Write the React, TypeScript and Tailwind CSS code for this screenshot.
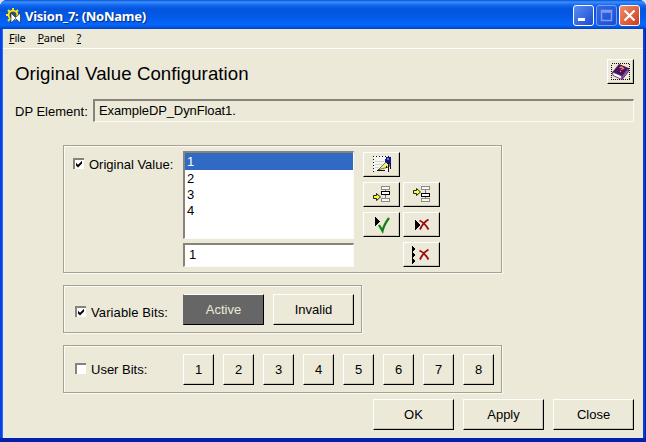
import React from 'react';

const raised =
  'border border-t-white border-l-white border-r-black border-b-black shadow-[inset_-1px_-1px_0_#c9c5b4] bg-[#ece9d8] flex items-center justify-center shrink-0';
const group = 'border border-[#a5a293] shadow-[inset_1px_1px_0_#fbfaf4,1px_1px_0_#fbfaf4] flex items-start';
const sunken = 'border-t-2 border-l-2 border-r border-b border-t-[#85837a] border-l-[#85837a] border-r-[#fbfaf4] border-b-[#fbfaf4]';

function Check({ on = false }: { on?: boolean }) {
  return (
    <span className="w-[11px] h-[11px] mb-[3px] shrink-0 bg-white border-t-2 border-l-2 border-[#85837a] flex">
      {on && (
        <svg width="9" height="9" viewBox="0 0 9 9" className="shrink-0">
          <path d="M1 2.8v2.6l2 2 4-4V.8L3 4.8z" fill="#000" />
        </svg>
      )}
    </span>
  );
}

function Btn({ label, small = false, active = false }: { label: string; small?: boolean; active?: boolean }) {
  return (
    <button
      className={
        active
          ? 'w-[81px] h-[31px] border border-t-white border-l-[#666] border-r-black border-b-black bg-[#666] text-[#ece9d8] flex items-center justify-center'
          : `${raised} h-[31px] ${small ? 'w-[31px]' : 'w-[81px]'}`
      }
    >
      <span>{label}</span>
    </button>
  );
}

function IconBtn({ children }: { children: React.ReactNode }) {
  return (
    <button className={`${raised} w-[37px] h-[25px]`}>
      <svg width="35" height="23" viewBox="0 0 35 23" className="shrink-0" shapeRendering="crispEdges">
        {children}
      </svg>
    </button>
  );
}

const Arrow = ({ x, y }: { x: number; y: number }) => (
  <path
    transform={`translate(${x} ${y})`}
    d="M.5 2.5h3v-2l4 3.5-4 3.5v-2h-3z"
    fill="#ffff30"
    stroke="#222"
    shapeRendering="auto"
  />
);

const Boxes = ({ x, y, middle }: { x: number; y: number; middle: number }) => (
  <g transform={`translate(${x} ${y})`} fill="#f8f8f4">
    <path d="M4.5 4v9" stroke="#777" />
    <rect x=".5" y=".5" width="8" height="3" stroke="#8a8a86" />
    <rect x=".5" y="12.5" width="8" height="3" stroke="#8a8a86" />
    <rect x=".5" y={middle + 0.5} width="8" height="3" stroke="#000" />
  </g>
);

const Cross = ({ x, y }: { x: number; y: number }) => (
  <path
    transform={`translate(${x} ${y})`}
    d="M.5 1.5C4 3 7 6 9.5 10.5M9.500 .5C5 3 3 6 1 10.5"
    stroke="#980d0d"
    strokeWidth="1.9"
    fill="none"
    shapeRendering="auto"
  />
);

function WinBtn({ kind }: { kind: 'min' | 'max' | 'close' }) {
  const look = {
    min: 'border-white bg-linear-to-br from-[#5c8df2] to-[#1c49d0]',
    max: 'border-[#7d9df0] bg-linear-to-br from-[#3468e4] to-[#1a4fd2]',
    close: 'border-white bg-linear-to-br from-[#ee8a6a] to-[#cf3a12]',
  }[kind];
  return (
    <span className={`w-[21px] h-[21px] rounded-[3px] border ${look}`}>
      <svg width="19" height="19" viewBox="0 0 19 19" fill="none">
        {kind === 'min' && <path d="M4 13.5h7" stroke="#fff" strokeWidth="3" />}
        {kind === 'max' && <path d="M4.5 4.5h10v10h-10zM4 6h11" stroke="#7d9df0" strokeWidth="1.5" />}
        {kind === 'close' && <path d="M4.5 4.5l10 10M14.5 4.5l-10 10" stroke="#fff" strokeWidth="2.2" />}
      </svg>
    </span>
  );
}

export default function App() {
  return (
    <div className="w-[646px] h-[442px] bg-[#d7dff3] overflow-hidden">
      <div className="w-[646px] h-[442px] rounded-t-[7px] overflow-hidden bg-[#0420a8] flex flex-col text-[13px] leading-[16px] text-black font-['Liberation_Sans',Arial,sans-serif]">
        <header className="h-[29px] shrink-0 flex items-start pl-[6px] pr-[6px] bg-[linear-gradient(180deg,#0a4fd0_0px,#3a91ff_2px,#1468f0_5px,#0355dd_9px,#0358e6_16px,#0566fb_24px,#0560f2_26px,#0141bd_29px)]">
          <svg width="16" height="16" viewBox="0 0 16 16" className="mt-[8px] shrink-0">
            <path d="M7 0v3M2 2l2 2M12 2l-2 2M0 7h3M2 13l2-2" stroke="#f8e71c" strokeWidth="2" />
            <circle cx="7" cy="7" r="4.4" fill="#35506a" stroke="#ffe91c" strokeWidth="1.8" />
            <path d="M5 5l4.500 4.500L14.500 5v10l-5-4.500L5 15z" fill="#fff" stroke="#111" strokeWidth=".6" />
          </svg>
          <h1 className="ml-[3px] mt-[7px] text-[13px] leading-[18px] font-bold text-white tracking-[-0.25px] whitespace-nowrap font-['Noto_Sans',sans-serif] [text-shadow:1px_1px_1px_#0a2a80]">
            Vision_7: (NoName)
          </h1>
          <div className="ml-auto mt-[5px] flex gap-[2px]">
            <WinBtn kind="min" />
            <WinBtn kind="max" />
            <WinBtn kind="close" />
          </div>
        </header>
        <div className="h-[409px] shrink-0 flex border-l-2 border-l-[#0a40dc] border-r border-r-[#0420a8] bg-[linear-gradient(90deg,#2a6cf0_0_1px,#ece9d8_1px_641px,#0a3cd8_641px)]">
          <main className="ml-[1px] w-[640px] h-[409px] bg-[#ece9d8] flex flex-col border-b border-b-[#dcecf8] shadow-[inset_1px_0_0_#dcecf8]">
            <nav className="h-[20px] shrink-0 border-b border-white flex pl-[6px] gap-[12px] text-[11px] leading-[18px] font-['Noto_Sans',sans-serif] tracking-[-0.3px]">
              <span><u>F</u>ile</span>
              <span><u>P</u>anel</span>
              <u>?</u>
            </nav>
            <div className="mt-[10px] h-[25px] ml-[12px] mr-[9px] flex justify-between items-center shrink-0">
              <h2 className="text-[18.67px] leading-[25px] whitespace-nowrap mt-[3px] tracking-[0.06px]">Original Value Configuration</h2>
              <button className={`${raised} w-[27px] h-[25px]`}>
                <svg width="21" height="19" viewBox="0 0 21 19">
                  <rect x="1.5" y="1.5" width="18" height="16" fill="none" stroke="#111" strokeDasharray="1 1" shapeRendering="crispEdges" />
                  <path d="M2.500 10l6.500-8 9.500 4-6.500 8z" fill="#4b1260" />
                  <path d="M2.500 10l9.500 4v3.500L3 13.500z" fill="#fff" stroke="#4b1260" strokeWidth=".8" />
                  <path d="M12 14L18.500 6v3.500L12 17.500z" fill="#8a64a8" stroke="#4b1260" strokeWidth=".8" />
                  <path d="M9.500 5.500l2.500-.5 1.500 1.500-2.500 1M10 9.200l1 .4" stroke="#f48a58" strokeWidth="1.3" fill="none" />
                </svg>
              </button>
            </div>
            <div className="mt-[15px] ml-[12px] mr-[9px] h-[23px] flex shrink-0">
              <label className="w-[78px] mt-[5px] whitespace-nowrap">DP Element:</label>
              <div className={`${sunken} flex-1 pl-[4px] pt-[2px] tracking-[-0.1px]`}>ExampleDP_DynFloat1.</div>
            </div>

            <section className={`${group} mt-[23px] ml-[60px] w-[439px] h-[128px] shrink-0`}>
              <label className="w-[119px] pl-[9px] pt-[11px] flex items-center gap-[5px] whitespace-nowrap">
                <Check on />Original Value:
              </label>
              <div className="pt-[5px] flex flex-col gap-[4px]">
                <ul className={`${sunken} w-[171px] h-[88px] bg-white`}>
                  <li className="h-[17px] pl-[2px] leading-[18px] bg-[#316ac5] text-white">1</li>
                  <li className="h-[16px] pl-[2px] leading-[17px]">2</li>
                  <li className="h-[16px] pl-[2px] leading-[17px]">3</li>
                  <li className="h-[16px] pl-[2px] leading-[17px]">4</li>
                </ul>
                <div className={`${sunken} w-[171px] h-[24px] bg-white pl-[4px] leading-[20px]`}>1</div>
              </div>
              <div className="ml-[9px] pt-[6px] grid grid-cols-2 gap-x-[3px] gap-y-[5px]">
                <IconBtn>
                  <path d="M9 3h15v15H9z" fill="#f7f7f2" />
                  <path d="M9 3.5h16M9.5 3v16" stroke="#111" strokeDasharray="1 2" />
                  <path d="M11 8h9M11 11h7M11 14h4" stroke="#d0d4d8" />
                  <path d="M14 17l8-8 4 1-1 4-8 2z" fill="#f4ef72" stroke="#333" strokeWidth=".7" shapeRendering="auto" />
                  <path d="M22 4h5v6l-3 2-3-4z" fill="#15158c" />
                  <path d="M24.5 10v9M26.5 10v6M22.5 13v2M13 17.5h8" stroke="#111" />
                  <path d="M23 5h2v2h-2z" fill="#6b75e8" />
                </IconBtn>
                <span />
                <IconBtn><Arrow x={9} y={10} /><Boxes x={17} y={3} middle={5} /></IconBtn>
                <IconBtn><Arrow x={9} y={5} /><Boxes x={17} y={3} middle={7} /></IconBtn>
                <IconBtn>
                  <path d="M11 4l5 4.5-5 4.5z" fill="#000" />
                  <path d="M15 12l3.500 6C19.500 13 22 9 25 5" fill="none" stroke="#118018" strokeWidth="2.2" shapeRendering="auto" />
                </IconBtn>
                <IconBtn><path d="M11 7l5 5-5 5z" fill="#000" /><Cross x={15} y={6} /></IconBtn>
                <span />
                <IconBtn><path d="M8 3l3 3-3 3zM8 9l3 3-3 3zM8 15l3 3-3 3z" fill="#000" /><Cross x={15} y={6} /></IconBtn>
              </div>
            </section>

            <section className={`${group} mt-[12px] ml-[60px] w-[299px] h-[48px] shrink-0`}>
              <label className="w-[119px] pl-[11px] pt-[19px] flex items-center gap-[5px] whitespace-nowrap tracking-[0.1px]"><Check on />Variable Bits:</label>
              <div className="pt-[8px] flex gap-[9px]"><Btn label="Active" active /><Btn label="Invalid" /></div>
            </section>

            <section className={`${group} mt-[12px] ml-[60px] w-[439px] h-[48px] shrink-0`}>
              <label className="w-[119px] pl-[11px] pt-[16px] flex items-center gap-[5px] whitespace-nowrap"><Check />User Bits:</label>
              <div className="pt-[8px] flex gap-[9px]">
                {['1', '2', '3', '4', '5', '6', '7', '8'].map((n) => <Btn key={n} label={n} small />)}
              </div>
            </section>

            <footer className="mt-[6px] mr-[9px] flex justify-end gap-[9px]">
              <Btn label="OK" /><Btn label="Apply" /><Btn label="Close" />
            </footer>
          </main>
        </div>
      </div>
    </div>
  );
}
